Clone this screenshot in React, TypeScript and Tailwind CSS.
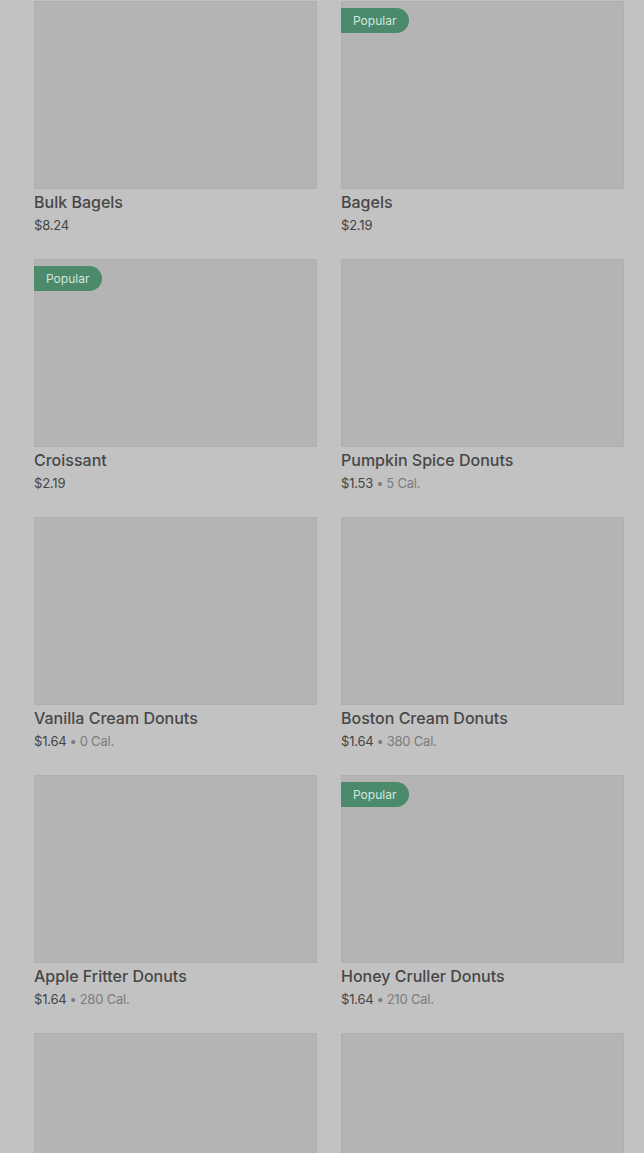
import React from "react";

type Item = { name: string; price: string; cal?: string; popular?: boolean };

const items: Item[] = [
  { name: "Bulk Bagels", price: "$8.24" },
  { name: "Bagels", price: "$2.19", popular: true },
  { name: "Croissant", price: "$2.19", popular: true },
  { name: "Pumpkin Spice Donuts", price: "$1.53", cal: "5 Cal." },
  { name: "Vanilla Cream Donuts", price: "$1.64", cal: "0 Cal." },
  { name: "Boston Cream Donuts", price: "$1.64", cal: "380 Cal." },
  { name: "Apple Fritter Donuts", price: "$1.64", cal: "280 Cal." },
  { name: "Honey Cruller Donuts", price: "$1.64", cal: "210 Cal.", popular: true },
  { name: "", price: "" },
  { name: "", price: "" },
];

export default function App() {
  return (
    <div
      className="w-[644px] h-[1153px] overflow-hidden bg-[#c2c2c2] pl-[34px] pr-[20px] pt-px"
      style={{ fontFamily: "Inter, Roboto, 'Noto Sans', sans-serif" }}
    >
      <div className="grid grid-cols-2 gap-x-[24px] gap-y-[24px]">
        {items.map((it, i) => (
          <div key={i} className="h-[234px] flex flex-col">
            <div className="relative h-[188px] bg-[#b4b4b4] border border-[#b0b0b0]">
              {it.popular && (
                <div className="absolute left-[-1px] top-[6px] h-[25px] pl-[12px] pr-[13px] rounded-r-full bg-[#4b8a6b] flex items-center text-[12px] text-[#d6e6dd]">
                  Popular
                </div>
              )}
            </div>
            {it.name && (
              <>
                <div className="mt-[3px] text-[16px] leading-[20px] font-medium text-[#474747]">
                  {it.name}
                </div>
                <div className="mt-[4px] text-[13px] leading-[18px] text-[#454545] flex items-center tracking-[-0.2px]">
                  <span>{it.price}</span>
                  {it.cal && (
                    <>
                      <span className="mx-[3px] text-[#7c7c7c]">•</span>
                      <span className="text-[#7c7c7c]">{it.cal}</span>
                    </>
                  )}
                </div>
              </>
            )}
          </div>
        ))}
      </div>
    </div>
  );
}
